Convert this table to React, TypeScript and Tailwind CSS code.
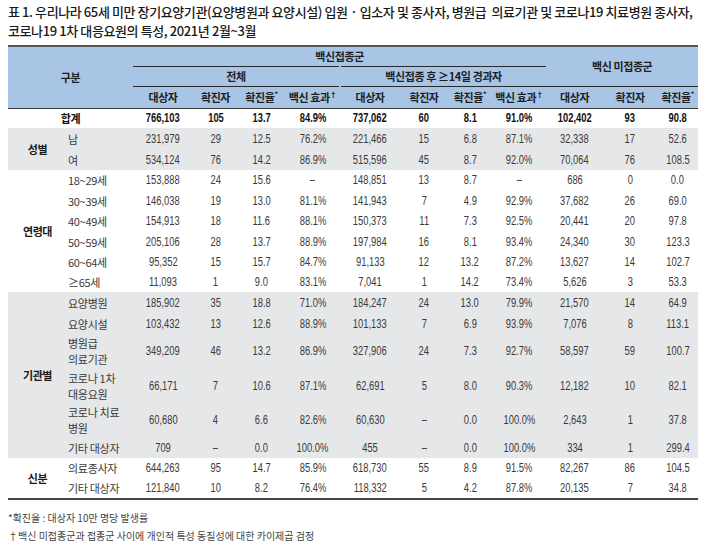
import React from 'react';

type Row = {
  label: React.ReactNode;
  vals: string[];
  h: string;
};

type Group = {
  name: string;
  gray: boolean;
  rows: Row[];
};

const total = ['766,103', '105', '13.7', '84.9%', '737,062', '60', '8.1', '91.0%', '102,402', '93', '90.8'];

const groups: Group[] = [
  {
    name: '성별',
    gray: true,
    rows: [
      { label: '남', h: 'h-[21px]', vals: ['231,979', '29', '12.5', '76.2%', '221,466', '15', '6.8', '87.1%', '32,338', '17', '52.6'] },
      { label: '여', h: 'h-[21px]', vals: ['534,124', '76', '14.2', '86.9%', '515,596', '45', '8.7', '92.0%', '70,064', '76', '108.5'] },
    ],
  },
  {
    name: '연령대',
    gray: false,
    rows: [
      { label: '18~29세', h: 'h-[20px]', vals: ['153,888', '24', '15.6', '–', '148,851', '13', '8.7', '–', '686', '0', '0.0'] },
      { label: '30~39세', h: 'h-[21px]', vals: ['146,038', '19', '13.0', '81.1%', '141,943', '7', '4.9', '92.9%', '37,682', '26', '69.0'] },
      { label: '40~49세', h: 'h-[20px]', vals: ['154,913', '18', '11.6', '88.1%', '150,373', '11', '7.3', '92.5%', '20,441', '20', '97.8'] },
      { label: '50~59세', h: 'h-[21px]', vals: ['205,106', '28', '13.7', '88.9%', '197,984', '16', '8.1', '93.4%', '24,340', '30', '123.3'] },
      { label: '60~64세', h: 'h-[20px]', vals: ['95,352', '15', '15.7', '84.7%', '91,133', '12', '13.2', '87.2%', '13,627', '14', '102.7'] },
      { label: '≥65세', h: 'h-[20px]', vals: ['11,093', '1', '9.0', '83.1%', '7,041', '1', '14.2', '73.4%', '5,626', '3', '53.3'] },
    ],
  },
  {
    name: '기관별',
    gray: true,
    rows: [
      { label: '요양병원', h: 'h-[21px]', vals: ['185,902', '35', '18.8', '71.0%', '184,247', '24', '13.0', '79.9%', '21,570', '14', '64.9'] },
      { label: '요양시설', h: 'h-[21px]', vals: ['103,432', '13', '12.6', '88.9%', '101,133', '7', '6.9', '93.9%', '7,076', '8', '113.1'] },
      { label: <>병원급<br />의료기관</>, h: 'h-[34px]', vals: ['349,209', '46', '13.2', '86.9%', '327,906', '24', '7.3', '92.7%', '58,597', '59', '100.7'] },
      { label: <>코로나 1차<br />대응요원</>, h: 'h-[35px]', vals: ['66,171', '7', '10.6', '87.1%', '62,691', '5', '8.0', '90.3%', '12,182', '10', '82.1'] },
      { label: <>코로나 치료<br />병원</>, h: 'h-[34px]', vals: ['60,680', '4', '6.6', '82.6%', '60,630', '–', '0.0', '100.0%', '2,643', '1', '37.8'] },
      { label: '기타 대상자', h: 'h-[21px]', vals: ['709', '–', '0.0', '100.0%', '455', '–', '0.0', '100.0%', '334', '1', '299.4'] },
    ],
  },
  {
    name: '신분',
    gray: false,
    rows: [
      { label: '의료종사자', h: 'h-[20px]', vals: ['644,263', '95', '14.7', '85.9%', '618,730', '55', '8.9', '91.5%', '82,267', '86', '104.5'] },
      { label: '기타 대상자', h: 'h-[21px]', vals: ['121,840', '10', '8.2', '76.4%', '118,332', '5', '4.2', '87.8%', '20,135', '7', '34.8'] },
    ],
  },
];

const widths = [59, 66, 60, 45, 47, 55, 60, 48, 44, 54, 57, 54, 41];

const kr = '[font-family:"Noto_Sans_CJK_KR","Liberation_Sans",sans-serif]';
const num = '[font-family:"Liberation_Sans","Noto_Sans_CJK_KR",sans-serif]';

function Star() {
  return <sup className="text-[7px] -top-[5px]">*</sup>;
}

function Dagger() {
  return <sup className="text-[7px] -top-[5px]">†</sup>;
}

// condensed look for the figures
function Num({ v }: { v: string }) {
  return <span className="inline-block scale-x-[0.78]">{v}</span>;
}

function SubHead() {
  return (
    <>
      <th className="font-bold">대상자</th>
      <th className="font-bold">확진자</th>
      <th className="font-bold">확진율<Star /></th>
      <th className="font-bold">백신 효과<Dagger /></th>
    </>
  );
}

export default function App() {
  return (
    <div className={`w-[708px] h-[552px] bg-white px-2 pt-[2px] text-[#333] ${kr}`}>
      <h1 className="text-[13px] leading-[19px] font-medium text-[#1a1a1a] tracking-[-0.4px] whitespace-nowrap">
        표 1. 우리나라 65세 미만 장기요양기관(요양병원과 요양시설) 입원 · 입소자 및 종사자, 병원급&nbsp; 의료기관 및 코로나19 치료병원 종사자,
        <br />
        코로나19 1차 대응요원의 특성, 2021년 2월~3월
      </h1>

      <table className="mt-[5px] w-[690px] table-fixed border-collapse border-t-2 border-t-[#555] border-b-2 border-b-[#444]">
        <colgroup>
          {widths.map((w, i) => (
            <col key={i} style={{ width: w }} />
          ))}
        </colgroup>
        <thead className="bg-[#a9c5e6] text-[11px] text-[#1f1f1f] tracking-[-0.4px]">
          <tr className="h-[20px]">
            <th colSpan={2} rowSpan={3} className="font-bold border-b-[1.5px] border-b-[#3a3a3a]">구분</th>
            <th colSpan={8} className="font-bold border-b border-b-[#2a2a2a]">백신접종군</th>
            <th colSpan={3} rowSpan={2} className="font-bold border-b border-b-[#2a2a2a]">백신 미접종군</th>
          </tr>
          <tr className="h-[20px]">
            <th colSpan={4} className="font-bold border-b border-b-[#2a2a2a] border-r-2 border-r-[#a9c5e6]">전체</th>
            <th colSpan={4} className="font-bold border-b border-b-[#2a2a2a]">백신접종 후 ≥14일 경과자</th>
          </tr>
          <tr className="h-[22px] [&>th]:border-b-[1.5px] [&>th]:border-b-[#3a3a3a]">
            <SubHead />
            <SubHead />
            <th className="font-bold">대상자</th>
            <th className="font-bold">확진자</th>
            <th className="font-bold">확진율<Star /></th>
          </tr>
        </thead>
        <tbody className="text-[12px] leading-4">
          <tr className="h-[20px] font-bold text-[#111]">
            <td colSpan={2} className="text-center text-[11px] tracking-[-0.4px]">합계</td>
            {total.map((v, i) => (
              <td key={i} className={`text-center ${num}`}><Num v={v} /></td>
            ))}
          </tr>
          {groups.map((g) =>
            g.rows.map((r, ri) => (
              <tr key={g.name + ri} className={`${r.h} ${g.gray ? 'bg-[#e6e7e9]' : ''}`}>
                {ri === 0 && (
                  <td rowSpan={g.rows.length} className="text-center text-[11px] font-bold text-[#1a1a1a] tracking-[-0.4px]">
                    {g.name}
                  </td>
                )}
                <td className="pl-[1px] text-[11px] tracking-[-0.3px] text-[#3a3a3a]">{r.label}</td>
                {r.vals.map((v, i) => (
                  <td key={i} className={`text-center text-[#3a3a3a] ${num}`}><Num v={v} /></td>
                ))}
              </tr>
            ))
          )}
        </tbody>
      </table>

      <div className="mt-[9px] text-[10px] leading-[18px] text-[#444]">
        <p>*확진율 : 대상자 10만 명당 발생률</p>
        <p>†백신 미접종군과 접종군 사이에 개인적 특성 동질성에 대한 카이제곱 검정</p>
      </div>
    </div>
  );
}
